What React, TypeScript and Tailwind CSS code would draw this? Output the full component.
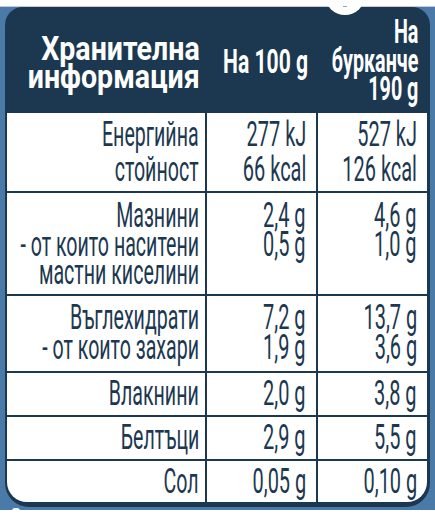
import React from "react";

type Row = {
  label: string[];
  per100: string[];
  perJar: string[];
  cell: string;
};

// heights / line spacing are per row, they differ in the original
const rows: Row[] = [
  { label: ["Енергийна", "стойност"], per100: ["277 kJ", "66 kcal"], perJar: ["527 kJ", "126 kcal"], cell: "h-[78px] pt-[4px] leading-[35px]" },
  {
    label: ["Мазнини", "- от които наситени", "мастни киселини"],
    per100: ["2,4 g", "0,5 g"],
    perJar: ["4,6 g", "1,0 g"],
    cell: "h-[101px] pt-[9px] leading-[28.5px]",
  },
  { label: ["Въглехидрати", "- от които захари"], per100: ["7,2 g", "1,9 g"], perJar: ["13,7 g", "3,6 g"], cell: "h-[75px] pt-[7px] leading-[30px]" },
  { label: ["Влакнини"], per100: ["2,0 g"], perJar: ["3,8 g"], cell: "h-[42px] leading-[42px]" },
  { label: ["Белтъци"], per100: ["2,9 g"], perJar: ["5,5 g"], cell: "h-[42px] leading-[42px]" },
  { label: ["Сол"], per100: ["0,05 g"], perJar: ["0,10 g"], cell: "h-[41px] leading-[41px]" },
];

const Lines = ({ lines, className = "" }: { lines: string[]; className?: string }) => (
  <div className={`shrink-0 whitespace-nowrap text-right origin-right ${className}`}>
    {lines.map((l) => (
      <div key={l}>{l}</div>
    ))}
  </div>
);

export default function App() {
  return (
    <div className="relative w-[435px] h-[520px] overflow-hidden bg-white font-['Roboto','Liberation_Sans',sans-serif]">
      <div className="h-[7px] bg-white border-b border-[#c4cbd2]" />
      <div className="bg-[#4a7aa8] px-[5px] pb-[3px]">
        <div className="bg-[#1c3850] rounded-t-[18px] rounded-b-[24px] pl-[2px] pr-[3px] pb-[5px]">
          {/* header */}
          <div className="grid grid-cols-[198px_109px_109px] gap-x-[2px] h-[106px] text-white font-bold text-[34px] leading-[28.5px]">
            <div className="flex flex-col items-end justify-center pr-[5px] pt-[4px]">
              <Lines lines={["Хранителна", "информация"]} className="scale-x-[0.84]" />
            </div>
            <div className="flex flex-col items-end justify-center pr-[8px] pt-[2px]">
              <Lines lines={["На 100 g"]} className="scale-x-[0.62]" />
            </div>
            <div className="flex flex-col items-end justify-center pr-[9px]">
              <Lines lines={["На", "бурканче", "190 g"]} className="scale-x-[0.58]" />
            </div>
          </div>

          {/* table */}
          <div className="grid grid-cols-[198px_109px_109px] gap-[2px] bg-[#1c3850] rounded-b-[20px] overflow-hidden text-[#1c3850] font-normal text-[35px]">
            {rows.map((r) => (
              <React.Fragment key={r.label[0]}>
                <div className={`bg-white flex flex-col items-end pr-[6px] ${r.cell}`}>
                  <Lines lines={r.label} className="scale-x-[0.56]" />
                </div>
                <div className={`bg-white flex flex-col items-end pr-[10px] ${r.cell}`}>
                  <Lines lines={r.per100} className="scale-x-[0.57]" />
                </div>
                <div className={`bg-white flex flex-col items-end pr-[10px] ${r.cell}`}>
                  <Lines lines={r.perJar} className="scale-x-[0.57]" />
                </div>
              </React.Fragment>
            ))}
          </div>
        </div>
      </div>

      {/* cut-out bits of the packaging over the top edge */}
      <div className="absolute left-[325px] top-[-25px] w-[40px] h-[40px] rounded-full bg-white" />
      <div className="absolute left-[343px] top-[6px] w-[4px] h-[1px] bg-[#9aa3ab]" />
      <div className="absolute left-[12px] top-[508px] w-[8px] h-[6px] rounded-full bg-white" />
    </div>
  );
}
